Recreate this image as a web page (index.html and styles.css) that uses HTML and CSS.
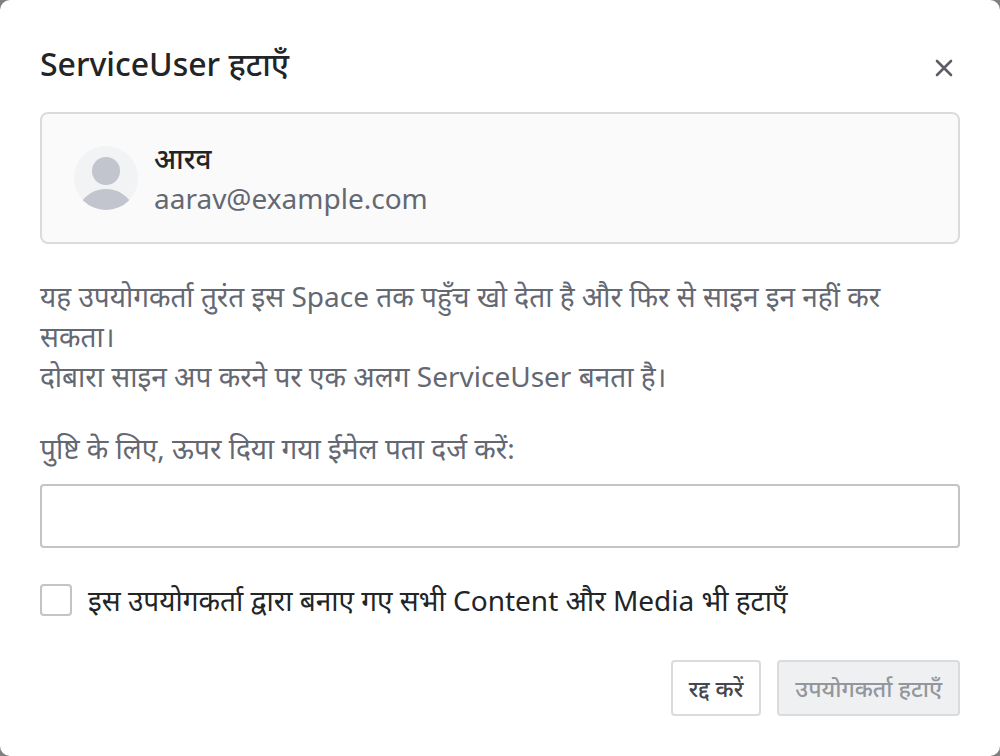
FILE: index.html
```html
<!DOCTYPE html>
<html lang="hi">
<head>
  <meta charset="UTF-8">
  <meta name="viewport" content="width=device-width, initial-scale=1.0">
  <title>ServiceUser हटाएँ</title>
  <link rel="stylesheet" href="styles.css">
</head>
<body>

  <div class="dialog" role="dialog" aria-labelledby="dialogTitle">
    <div class="dialog-header">
      <h2 id="dialogTitle">ServiceUser हटाएँ</h2>
      <button type="button" class="close" aria-label="बंद करें">
        <svg width="20" height="20" viewBox="0 0 20 20" fill="none" stroke="#5b5e68" stroke-width="2.6" stroke-linecap="round">
          <path d="M3 3L17 17M17 3L3 17"/>
        </svg>
      </button>
    </div>

    <div class="user-card">
      <svg class="avatar" viewBox="0 0 64 64">
        <defs>
          <clipPath id="avatarClip"><circle cx="32" cy="32" r="32"/></clipPath>
        </defs>
        <circle cx="32" cy="32" r="32" fill="#f1f3f5"/>
        <g clip-path="url(#avatarClip)" fill="#c2c4ce">
          <circle cx="32" cy="25" r="14"/>
          <ellipse cx="32" cy="70" rx="29" ry="27"/>
        </g>
      </svg>
      <div class="user-info">
        <div class="user-name">आरव</div>
        <div class="user-email">aarav@example.com</div>
      </div>
    </div>

    <form id="removeForm">
      <p class="message">यह उपयोगकर्ता तुरंत इस Space तक पहुँच खो देता है और फिर से साइन इन नहीं कर सकता।<br>
      दोबारा साइन अप करने पर एक अलग ServiceUser बनता है।</p>

      <label class="field-label" for="confirmEmail">पुष्टि के लिए, ऊपर दिया गया ईमेल पता दर्ज करें:</label>
      <input type="text" id="confirmEmail" class="text-input">

      <div class="check-row">
        <input type="checkbox" id="removeContent">
        <label for="removeContent">इस उपयोगकर्ता द्वारा बनाए गए सभी Content और Media भी हटाएँ</label>
      </div>

      <div class="actions">
        <button type="button" class="btn">रद्द करें</button>
        <button type="submit" class="btn btn-remove" disabled>उपयोगकर्ता हटाएँ</button>
      </div>
    </form>
  </div>

</body>
</html>
```
FILE: styles.css
```css
* {
  box-sizing: border-box;
}

body {
  margin: 0;
  background-color: #7f7f7f;
  font-family: 'Noto Sans', sans-serif;
  font-size: 28px;
  line-height: 40px;
  color: #222426;
}

.dialog {
  min-height: 100vh;
  padding: 40px;
  background-color: #ffffff;
  border-radius: 10px;
}

.dialog-header {
  display: flex;
  justify-content: space-between;
  align-items: flex-end;
  height: 48px;
  margin-bottom: 24px;
}

.dialog-header h2 {
  margin: 0;
  font-size: 32px;
  font-weight: 500;
  line-height: 48px;
}

.close {
  display: flex;
  padding: 10px 6px;
  border: none;
  background: none;
  cursor: pointer;
}

.user-card {
  display: flex;
  align-items: center;
  gap: 16px;
  padding: 24px 32px;
  background-color: #fafafa;
  border: 2px solid #dadbdd;
  border-radius: 8px;
}

.avatar {
  width: 64px;
  height: 64px;
}

.user-name {
  font-weight: 500;
}

.user-email,
.message,
.field-label {
  color: #646872;
}

.message {
  margin: 32px 0;
}

.field-label {
  display: block;
  margin-bottom: 16px;
}

.text-input {
  display: block;
  width: 100%;
  height: 64px;
  padding: 0 16px;
  border: 2px solid #c3c4c7;
  border-radius: 4px;
  font: inherit;
}

.check-row {
  display: flex;
  align-items: center;
  gap: 16px;
  margin: 32px 0 40px;
}

.check-row input {
  appearance: none;
  width: 32px;
  height: 32px;
  margin: 0;
  border: 2px solid #c3c4c7;
  border-radius: 4px;
}

.check-row input:checked {
  background-color: #545b66;
}

.actions {
  display: flex;
  justify-content: flex-end;
  gap: 16px;
}

.btn {
  height: 56px;
  padding: 0 16px;
  border: 2px solid #dadbdd;
  border-radius: 4px;
  background-color: #ffffff;
  color: #44474d;
  font: inherit;
  font-size: 23px;
  font-weight: 500;
  cursor: pointer;
}

.btn-remove {
  background-color: #eff0f2;
  color: #93969d;
  cursor: default;
}
```
